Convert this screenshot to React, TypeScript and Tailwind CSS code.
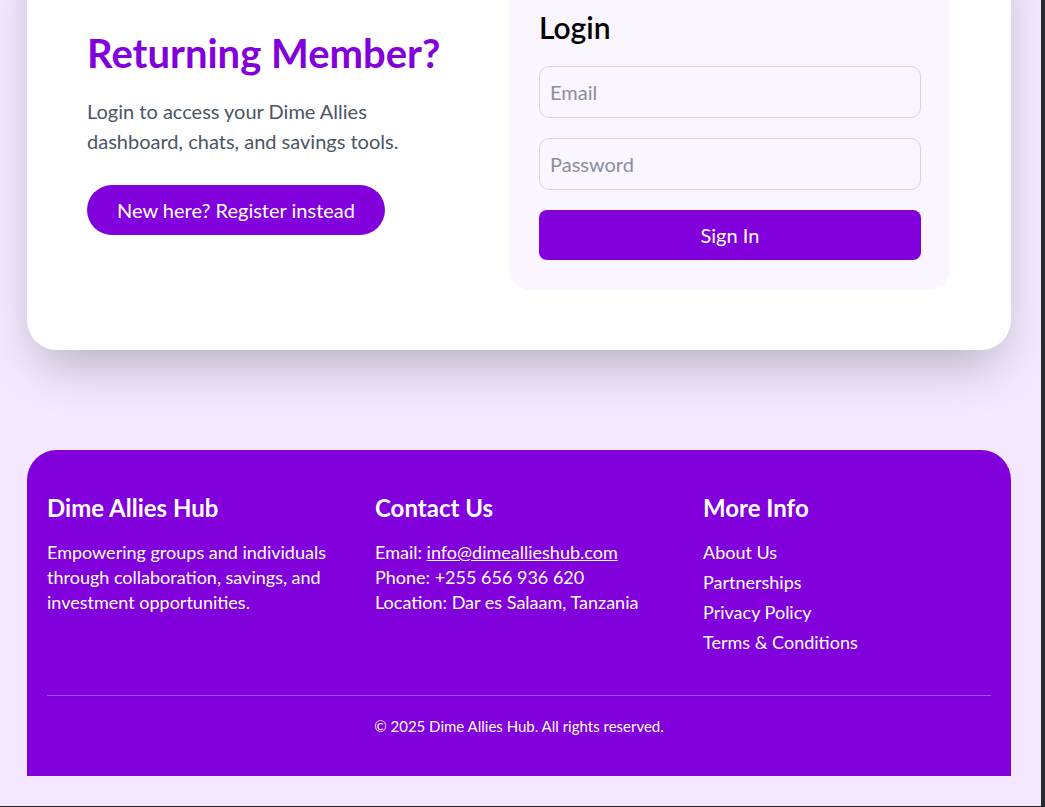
import React from "react";

const font = { fontFamily: 'Lato, "Noto Sans", Arial, sans-serif' };

export default function App() {
  return (
    <div className="flex flex-col h-[807px] w-[1045px] overflow-hidden bg-[#202124]" style={font}>
      <div className="flex h-[806px]">
        <div className="w-[1041px] h-[806px] overflow-hidden bg-[#f3e8ff]">
          <div className="-mt-[80px] flex flex-col">
            {/* Card */}
            <div className="ml-[27px] w-[984px] rounded-[30px] bg-white shadow-2xl pl-[60px] pr-[61px] pt-[60px] pb-[60px] flex gap-6">
              <div className="flex-1 pt-[49px]">
                <h1 className="text-[40px] leading-[48px] font-bold text-[#8200db] mb-[19px]">Returning Member?</h1>
                <p className="text-xl leading-[30px] text-[#4a5565] mb-[29px]">
                  Login to access your Dime Allies
                  <br />
                  dashboard, chats, and savings tools.
                </p>
                <button className="h-[50px] px-[30px] rounded-full bg-[#8200db] text-white text-xl">
                  New here? Register instead
                </button>
              </div>
              <div className="w-[440px] rounded-[20px] bg-[#faf5ff] pt-[30px] pb-[30px] px-[29px]">
                <h2 className="text-3xl leading-9 font-semibold text-black mb-5 -translate-y-px">Login</h2>
                <div className="flex flex-col gap-5">
                  <input
                    placeholder="Email"
                    className="w-full h-[52px] rounded-[10px] border border-[#d1d5dc] bg-transparent px-[10px] text-xl placeholder:text-[#8a8f9a] outline-none"
                  />
                  <input
                    type="password"
                    placeholder="Password"
                    className="w-full h-[52px] rounded-[10px] border border-[#d1d5dc] bg-transparent px-[10px] text-xl placeholder:text-[#8a8f9a] outline-none"
                  />
                  <button className="w-full h-[50px] rounded-lg bg-[#8200db] text-white text-xl">Sign In</button>
                </div>
              </div>
            </div>

            {/* Footer */}
            <footer className="ml-[27px] w-[984px] mt-[100px] rounded-t-[30px] bg-[#8200db] px-5 pt-10 pb-[38px] text-white">
              <div className="grid grid-cols-3 gap-10">
                <div>
                  <h3 className="text-2xl leading-8 font-bold mt-[2px] mb-4">Dime Allies Hub</h3>
                  <p className="text-lg leading-[25px]">
                    Empowering groups and individuals through collaboration, savings, and investment opportunities.
                  </p>
                </div>
                <div>
                  <h3 className="text-2xl leading-8 font-bold mt-[2px] mb-4">Contact Us</h3>
                  <p className="text-lg leading-[25px]">
                    Email: <a className="underline">info@dimeallieshub.com</a>
                  </p>
                  <p className="text-lg leading-[25px]">Phone: +255 656 936 620</p>
                  <p className="text-lg leading-[25px]">Location: Dar es Salaam, Tanzania</p>
                </div>
                <div>
                  <h3 className="text-2xl leading-8 font-bold mt-[2px] mb-4">More Info</h3>
                  <ul className="flex flex-col gap-[5px] text-lg leading-[25px]">
                    <li>About Us</li>
                    <li>Partnerships</li>
                    <li>Privacy Policy</li>
                    <li>Terms &amp; Conditions</li>
                  </ul>
                </div>
              </div>
              <div className="mt-10 border-t border-[#a74ce6] pt-[18px] text-center text-[15px] leading-6">
                © 2025 Dime Allies Hub. All rights reserved.
              </div>
            </footer>
          </div>
        </div>
        <div className="w-[4px] h-[806px] bg-[#2a2a2e]" />
      </div>
    </div>
  );
}
